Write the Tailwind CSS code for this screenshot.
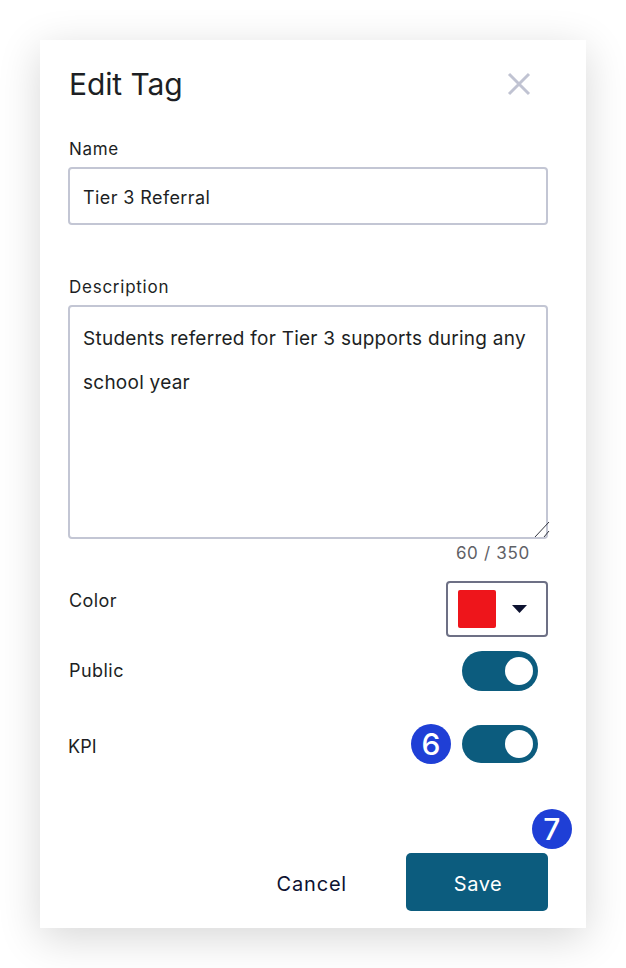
<!DOCTYPE html>
<html><head><meta charset="utf-8"><script src="https://cdn.jsdelivr.net/npm/@tailwindcss/browser@4"></script></head>
<body class="bg-white">
<div class="w-[626px] h-[968px] pt-[40px] pl-[40px] font-['Inter','Liberation_Sans',sans-serif] overflow-hidden">
<div class="relative w-[546px] h-[888px] bg-white shadow-[0_10px_40px_rgba(0,0,0,0.16)] pl-[28px] pr-[38px] flex flex-col text-[#1d1f24]">
  <div class="h-[88px] flex items-center justify-between pr-[16px]">
    <h1 class="text-[30px] leading-[36px] pl-[1px] tracking-[-0.1px] font-normal">Edit Tag</h1>
    <svg class="-mt-[1px]" width="26" height="26" viewBox="0 0 26 26" fill="none" stroke="#c0c3d2" stroke-width="3"><path d="M3 3L23 23M23 3L3 23"/></svg>
  </div>
  <div class="h-[39px] pl-[1px] pt-[1px] text-[17px] leading-[40px] tracking-[0.7px]">Name</div>
  <div class="h-[58px] border-2 border-[#c3c6d4] rounded-[4px] flex items-center pl-[13px] pt-[3px] text-[18px] tracking-[0.4px]">Tier 3 Referral</div>
  <div class="h-[80px] pl-[1px] pt-[50px] text-[17px] leading-[24px] tracking-[0.75px]">Description</div>
  <div class="relative h-[234px] border-2 border-[#c3c6d4] rounded-[4px] pl-[13px] pr-[16px] pt-[10px] text-[19px] leading-[44px] tracking-[0.25px]">Students referred for Tier 3 supports during any school year
    <svg class="absolute right-[-4px] bottom-[-1px]" width="16" height="17" viewBox="0 0 16 17" fill="none" stroke="#33363f" stroke-width="1"><path d="M1 16L15 1M10 16L15 10"/></svg>
  </div>
  <div class="h-[42px] pr-[18px] pt-[3px] text-right text-[17px] leading-[22px] tracking-[0.7px] text-[#5f6166]">60 / 350</div>
  <div class="h-[56px] flex items-center justify-between">
    <span class="pl-[1px] text-[18px] tracking-[0.4px] -mt-[17px]">Color</span>
    <div class="w-[102px] h-[56px] border-2 border-[#6d7085] rounded-[4px] flex items-center pl-[10px]">
      <div class="w-[38px] h-[38px] bg-[#ee151b] rounded-[2px]"></div>
      <svg class="ml-[16px] -mt-[1px]" width="15" height="8" viewBox="0 0 15 8"><path d="M0 0H15L7.5 8Z" fill="#0d1230"/></svg>
    </div>
  </div>
  <div class="h-[40px] mt-[14px] flex items-center justify-between">
    <span class="pl-[1px] text-[18px] tracking-[0.45px] -mt-[1px]">Public</span>
    <div class="mr-[10px] w-[76px] h-[40px] rounded-full bg-[#0c5c7e] flex items-center justify-end pr-[5px]"><div class="w-[28px] h-[28px] rounded-full bg-white"></div></div>
  </div>
  <div class="h-[38px] mt-[34px] flex items-center justify-between">
    <span class="text-[18px] tracking-[0.1px] mt-[4px]">KPI</span>
    <div class="flex items-center gap-[11px] mr-[10px]">
      <div class="w-[40px] h-[40px] -my-[2px] rounded-full bg-[#1f3fd6] text-white flex items-center justify-center text-[30px] font-medium">6</div>
      <div class="w-[76px] h-[38px] rounded-full bg-[#0c5c7e] flex items-center justify-end pr-[5px]"><div class="w-[28px] h-[28px] rounded-full bg-white"></div></div>
    </div>
  </div>
  <div class="h-[58px] mt-[90px] flex items-center justify-end">
    <span class="mr-[59px] mt-[3px] text-[20px] tracking-[0.8px] text-[#0d1230]">Cancel</span>
    <div class="relative w-[142px] h-[58px] pt-[3px] pl-[2px] bg-[#0c5c7e] rounded-[5px] text-white text-[20px] tracking-[0.5px] flex items-center justify-center">Save
      <div class="absolute -top-[44px] -right-[24px] w-[40px] h-[40px] rounded-full bg-[#1f3fd6] text-white flex items-center justify-center text-[30px] font-medium">7</div>
    </div>
  </div>
</div>
</div>
</body></html>
